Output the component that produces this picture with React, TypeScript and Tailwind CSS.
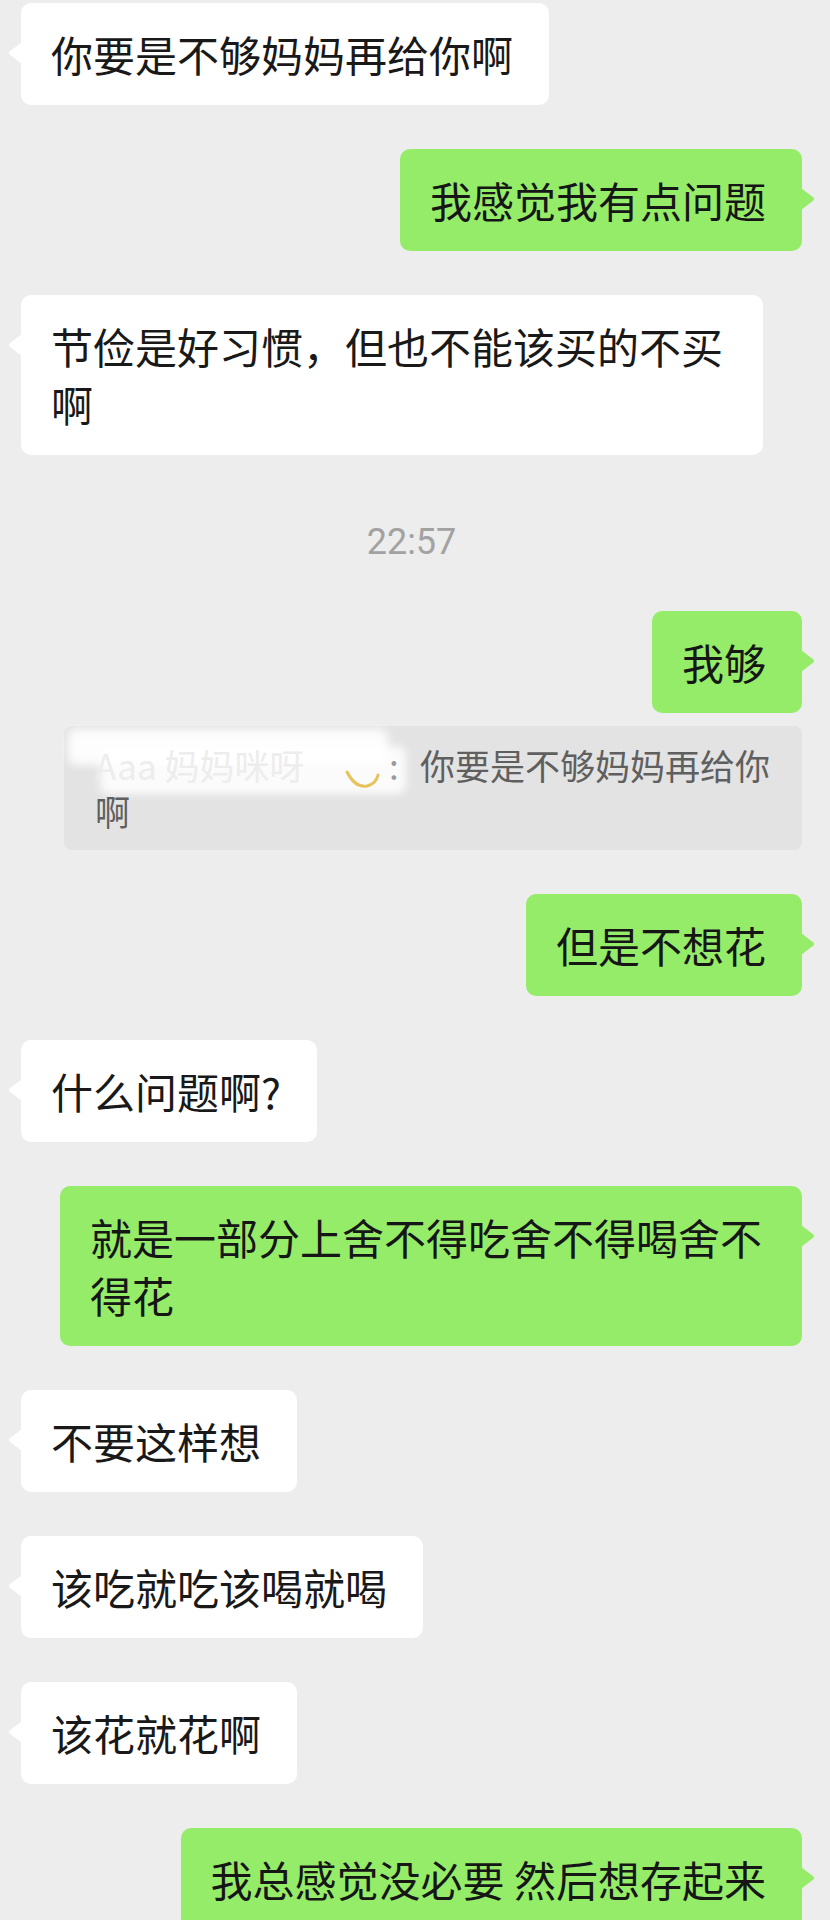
import React from "react";

type Side = "left" | "right";

const Tail = ({ side, color }: { side: Side; color: string }) =>
  side === "left" ? (
    <svg className="absolute left-[-13px] top-[39px]" width="14" height="22" viewBox="0 0 14 22">
      <path d="M14 0 L1.6 9.6 Q0 11 1.6 12.4 L14 22 Z" fill={color} />
    </svg>
  ) : (
    <svg className="absolute right-[-13px] top-[39px]" width="14" height="22" viewBox="0 0 14 22">
      <path d="M0 0 L12.4 9.6 Q14 11 12.4 12.4 L0 22 Z" fill={color} />
    </svg>
  );

const Bubble = ({ side, children }: { side: Side; children: React.ReactNode }) => {
  const mine = side === "right";
  return (
    <div className={mine ? "flex justify-end" : "flex justify-start"}>
      <div
        className={
          mine
            ? "relative max-w-[742px] rounded-[10px] bg-[#95ec69] pl-[30px] pr-[36px] py-[22px] text-[42px] leading-[58px] text-[#161616]"
            : "relative max-w-[742px] rounded-[10px] bg-white pl-[30px] pr-[36px] py-[22px] text-[42px] leading-[58px] text-[#191919]"
        }
      >
        <Tail side={side} color={mine ? "#95ec69" : "#ffffff"} />
        {children}
      </div>
    </div>
  );
};

const Quote = () => (
  <div className="relative ml-[43px] rounded-[8px] bg-[#e3e3e3] px-[31px] py-[16px] text-[35px] leading-[46px] text-[#5f5f5f]">
    {/* smudged-out sender name */}
    <div className="absolute left-[4px] top-[3px] h-[36px] w-[320px] rounded-[8px] bg-white/90 blur-[4px]" />
    <div className="absolute left-[36px] top-[20px] h-[48px] w-[306px] rounded-[8px] bg-white/85 blur-[4px]" />
    <svg className="absolute left-[279px] top-[40px]" width="40" height="26" viewBox="0 0 40 26">
      <path d="M4 6 Q12 22 24 20 Q33 18 35 9" fill="none" stroke="#e8c25a" strokeWidth="3" strokeLinecap="round" />
    </svg>
    <div className="relative whitespace-nowrap">
      <span className="inline-block w-[288px] text-[#ededed]">Aaa 妈妈咪呀</span>
      <span className="inline-block w-[37px] pl-[6px] text-[#9a9a9a]">:</span>
      <span>你要是不够妈妈再给你</span>
    </div>
    <div className="relative">啊</div>
  </div>
);

export default function App() {
  return (
    <div className="h-[1920px] w-[830px] overflow-hidden bg-[#ededed] font-['Noto_Sans_CJK_SC','Noto_Sans',sans-serif]">
      <div className="flex flex-col gap-[44px] pl-[21px] pr-[28px] pt-[3px]">
        <Bubble side="left">你要是不够妈妈再给你啊</Bubble>
        <Bubble side="right">我感觉我有点问题</Bubble>
        <Bubble side="left">节俭是好习惯，但也不能该买的不买啊</Bubble>
        <div className="mt-[18px] text-center font-['Roboto',sans-serif] text-[36px] leading-[50px] text-[#a2a2a2]">
          22:57
        </div>
        <div className="flex flex-col gap-[13px]">
          <Bubble side="right">我够</Bubble>
          <Quote />
        </div>
        <Bubble side="right">但是不想花</Bubble>
        <Bubble side="left">什么问题啊?</Bubble>
        <Bubble side="right">就是一部分上舍不得吃舍不得喝舍不得花</Bubble>
        <Bubble side="left">不要这样想</Bubble>
        <Bubble side="left">该吃就吃该喝就喝</Bubble>
        <Bubble side="left">该花就花啊</Bubble>
        <Bubble side="right">我总感觉没必要 然后想存起来</Bubble>
      </div>
    </div>
  );
}
